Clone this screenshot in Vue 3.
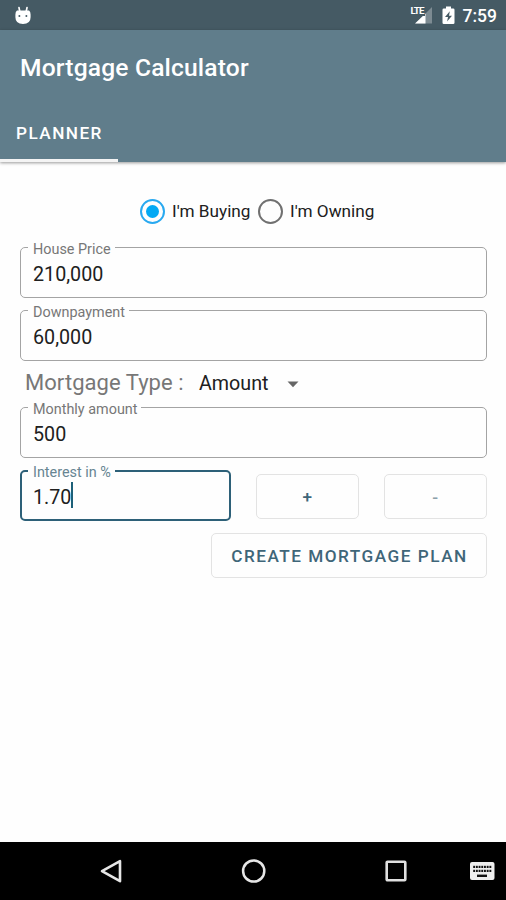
<script setup>
import { ref } from 'vue'

const mode = ref('buying')
const modes = [
  { id: 'buying', label: "I'm Buying" },
  { id: 'owning', label: "I'm Owning" },
]
const keyColumns = [4.2, 6.9, 9.6, 12.3, 15, 17.7]
</script>

<template>
  <div class="screen">
    <header class="status">
      <svg class="droid" width="18" height="19" viewBox="0 0 18 19">
        <path d="M5 1.600l.8 4M13 1.600l-.8 4" stroke="#fff" stroke-width="1.700" stroke-linecap="round" />
        <path d="M3 4.500h12q1.600 1 1.600 4v2.800q0 6.700-7.600 6.700T1.400 11.300V8.500q0-3 1.600-4z" fill="#fff" />
        <circle cx="5.400" cy="9.900" r="1" fill="#455a64" />
        <circle cx="12.400" cy="9.900" r="1" fill="#455a64" />
      </svg>
      <div class="status-right">
        <div class="network">
          <svg width="24" height="20" viewBox="0 0 24 20">
            <path d="M22 2v16.500H5.500z" fill="#fff" opacity=".3" />
            <path d="M15.500 8.500v10H5z" fill="#fff" />
          </svg>
          <span class="lte">LTE</span>
        </div>
        <svg class="battery" width="13" height="19" viewBox="0 0 13 19">
          <path d="M4 0.500h5v2h2.200q1.300 0 1.300 1.300v12.900q0 1.300-1.300 1.300H1.800Q.5 18 .5 16.700V3.800q0-1.300 1.300-1.300H4z" fill="#fff" />
          <path d="M7.800 5.300L3 11h3l-.9 4.400L10 9.700H7z" fill="#455a64" />
        </svg>
        <span class="clock">7:59</span>
      </div>
    </header>

    <div class="appbar">
      <h1>Mortgage Calculator</h1>
      <nav><span class="tab">PLANNER</span></nav>
    </div>

    <main>
      <div class="radios">
        <label v-for="m in modes" :key="m.id" :class="['radio', m.id]" @click="mode = m.id">
          <span :class="['dot', { on: mode === m.id }]"></span>
          <span class="radio-text">{{ m.label }}</span>
        </label>
      </div>

      <fieldset class="field">
        <legend>House Price</legend>
        <span>210,000</span>
      </fieldset>
      <fieldset class="field">
        <legend>Downpayment</legend>
        <span>60,000</span>
      </fieldset>

      <div class="type-row">
        <span class="type-label">Mortgage Type :</span>
        <span class="type-value">Amount</span>
        <svg width="12" height="7" viewBox="0 0 12 7"><path d="M0.500 0.500h11L6 6.300z" fill="#666" /></svg>
      </div>

      <fieldset class="field">
        <legend>Monthly amount</legend>
        <span>500</span>
      </fieldset>

      <div class="interest-row">
        <fieldset class="field focused">
          <legend>Interest in %</legend>
          <div class="entry"><span>1.70</span><i class="caret"></i></div>
        </fieldset>
        <button class="step plus">+</button>
        <button class="step minus">-</button>
      </div>

      <button class="create">CREATE MORTGAGE PLAN</button>
    </main>

    <footer class="navbar">
      <svg class="back" width="24" height="26" viewBox="0 0 24 26">
        <path d="M21 3.200v20L3 13.200z" fill="none" stroke="#e6e6e6" stroke-width="2.600" stroke-linejoin="round" />
      </svg>
      <svg class="home" width="26" height="26" viewBox="0 0 26 26">
        <circle cx="12.700" cy="13" r="10.600" fill="none" stroke="#e6e6e6" stroke-width="2.500" />
      </svg>
      <svg class="recent" width="22" height="22" viewBox="0 0 22 22">
        <rect x="1.700" y="1.700" width="18.600" height="18.600" rx=".8" fill="none" stroke="#e0e0e0" stroke-width="2.600" />
      </svg>
      <svg class="keyboard" width="26" height="20" viewBox="0 0 26 20">
        <rect x="1" y="1" width="24.500" height="18" rx="2" fill="#eee" />
        <g fill="#111">
          <template v-for="x in keyColumns" :key="x">
            <rect :x="x" y="4.800" width="1.900" height="2.200" />
            <rect :x="x" y="8.800" width="1.900" height="2.200" />
          </template>
          <rect x="20.400" y="4.800" width="1.900" height="2.200" />
          <rect x="20.400" y="8.800" width="1.900" height="2.200" />
          <rect x="8" y="13.600" width="10" height="2.400" />
        </g>
      </svg>
    </footer>
  </div>
</template>

<style>
body {
  background: #fefefe;
}
</style>

<style scoped>
.screen {
  width: 506px;
  height: 900px;
  display: flex;
  flex-direction: column;
  background: #fefefe;
  font-family: Roboto, sans-serif;
  color: #202020;
  overflow: hidden;
}
svg {
  display: block;
  flex: none;
}
.status {
  height: 30px;
  flex: none;
  display: flex;
  justify-content: space-between;
  align-items: center;
  background: #455a64;
  padding: 0 9px 0 14px;
  color: #fff;
}
.status-right {
  display: flex;
  align-items: center;
}
.network {
  position: relative;
  margin-right: 8px;
}
.lte {
  position: absolute;
  left: 0;
  top: 0;
  font-size: 9.8px;
  line-height: 11px;
  font-weight: 700;
  letter-spacing: -0.9px;
  background: #455a64;
  padding: 0 1px 0 1px;
}
.battery {
  margin-right: 8px;
}
.clock {
  font-size: 17.5px;
  line-height: 22px;
  font-weight: 500;
  padding-top: 2px;
}
.appbar {
  height: 132px;
  flex: none;
  background: #607d8b;
  color: #fff;
  box-shadow: 0 1px 3px rgba(0, 0, 0, 0.4);
}
h1 {
  margin: 0;
  padding: 20px 0 0 20px;
  font-size: 24.6px;
  line-height: 36px;
  font-weight: 500;
  letter-spacing: 0.17px;
  white-space: nowrap;
}
nav {
  display: flex;
  padding-top: 17px;
}
.tab {
  width: 102px;
  height: 56px;
  border-bottom: 3px solid #f4f4f4;
  padding-left: 16px;
  font-size: 17.2px;
  line-height: 60px;
  font-weight: 500;
  letter-spacing: 1.45px;
}
main {
  flex: 1;
  display: flex;
  flex-direction: column;
  padding: 36px 19px 0 20px;
}
.radios {
  display: flex;
  padding-left: 120px;
  height: 26px;
}
.radio {
  display: flex;
  align-items: center;
  gap: 8px;
}
.radio.buying {
  width: 118px;
}
.dot {
  box-sizing: border-box;
  flex: none;
  width: 25px;
  height: 25px;
  margin-right: -1px;
  border: 2.5px solid #707070;
  border-radius: 50%;
  display: grid;
  place-items: center;
}
.dot.on {
  border-color: #29a9f0;
}
.dot.on::after {
  content: '';
  width: 13px;
  height: 13px;
  border-radius: 50%;
  background: #03a9f4;
}
.radio-text {
  font-size: 17.2px;
  line-height: 22px;
  white-space: nowrap;
}
.field {
  box-sizing: border-box;
  width: 467px;
  min-width: 0;
  height: 61px;
  flex: none;
  margin: 0 0 2px;
  padding: 0 11px 0 7px;
  border: 1.500px solid #a4a4a4;
  border-radius: 5px;
}
.radios + .field {
  margin-top: 13px;
}
legend {
  height: 15px;
  padding: 5px 4px 0 5px;
  font-size: 14.4px;
  line-height: 15px;
  color: #777;
  white-space: nowrap;
}
.field span {
  display: block;
  padding-left: 5px;
  font-size: 19.7px;
  line-height: 36px;
}
.type-row {
  height: 30px;
  display: flex;
  align-items: center;
  padding: 4px 0 0 5px;
}
.type-row svg {
  margin-top: 4px;
}
.type-label {
  width: 174px;
  font-size: 22px;
  color: #777;
  letter-spacing: 0.05px;
  white-space: nowrap;
}
.type-value {
  width: 88px;
  padding-top: 2px;
  font-size: 19.7px;
}
.interest-row {
  display: flex;
  align-items: flex-end;
  height: 61px;
}
.focused {
  width: 211px;
  height: 60px;
  margin: 0;
  padding-left: 6px;
  border: 2px solid #2d6078;
}
.focused legend {
  padding-top: 4px;
  height: 15px;
  color: #678592;
}
.entry {
  display: flex;
}
.caret {
  width: 2px;
  height: 26px;
  margin-top: 2px;
  background: #1d6078;
}
button {
  box-sizing: border-box;
  height: 45px;
  border: 1.500px solid #e3e3e3;
  border-radius: 5px;
  background: transparent;
  font-family: inherit;
  font-size: 17.2px;
  font-weight: 500;
  letter-spacing: 1.5px;
  color: #3f6679;
  padding: 0 0 0 1px;
  white-space: nowrap;
}
.step {
  width: 103px;
  margin-bottom: 2px;
}
.plus {
  margin-left: 25px;
}
.minus {
  margin-left: 25px;
  color: #8ba0aa;
}
.create {
  align-self: flex-end;
  width: 276px;
  margin-top: 12px;
}
.navbar {
  height: 58px;
  flex: none;
  background: #000;
  display: flex;
  align-items: center;
  padding-left: 99px;
}
.home {
  margin-left: 118px;
}
.recent {
  margin-left: 118px;
}
.keyboard {
  margin-left: 62px;
}
</style>
